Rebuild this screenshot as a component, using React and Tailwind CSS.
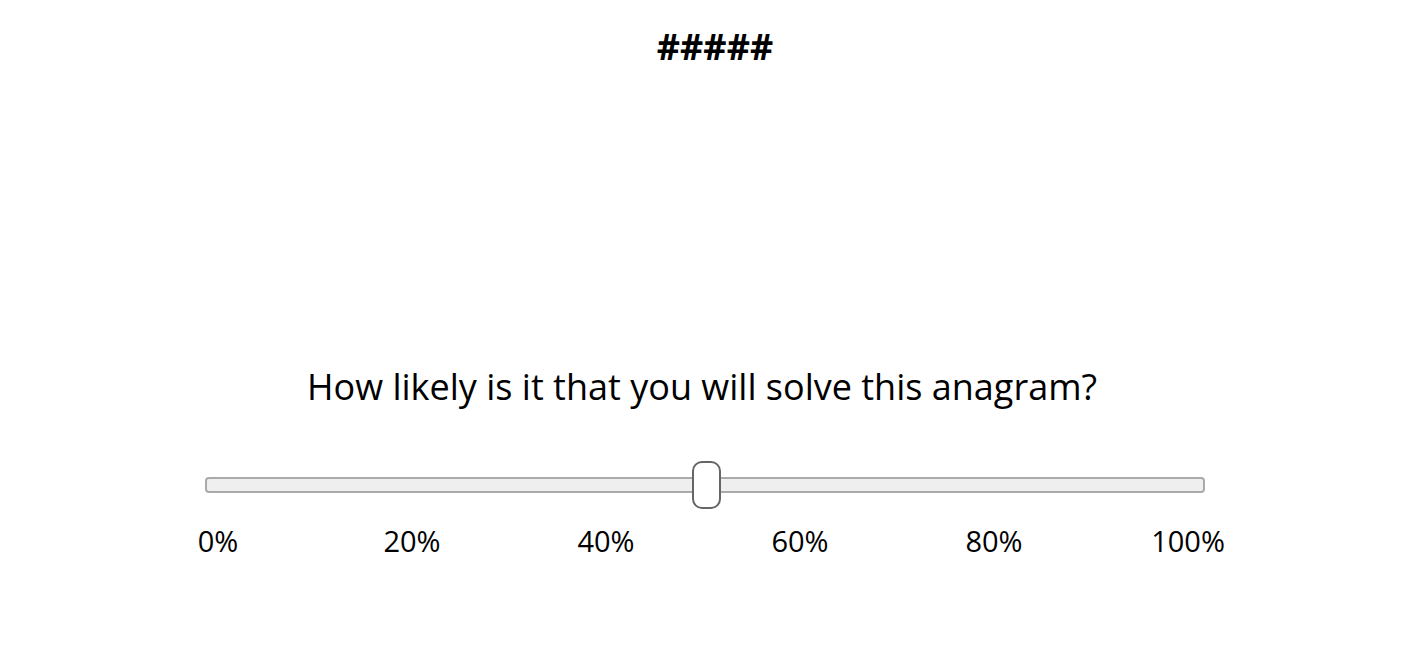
export default function App() {
  const labels = ["0%", "20%", "40%", "60%", "80%", "100%"];
  return (
    <div
      className="w-[1404px] h-[672px] bg-white text-black flex flex-col items-center"
      style={{ fontFamily: '"Open Sans", sans-serif' }}
    >
      <div className="mt-[22px] ml-[26px] text-[36px] font-bold leading-[50px]">#####</div>
      <div className="mt-[291px] text-[36px] leading-[48px]">
        How likely is it that you will solve this anagram?
      </div>
      <div className="mt-[50px] w-[1000px] ml-[6px] flex flex-col">
        <div className="relative h-[48px] flex items-center">
          <div className="w-full h-[16px] rounded-[4px] bg-[#efefef] border-2 border-[#aaaaaa]"></div>
          <div className="absolute left-[487px] top-0 w-[29px] h-[48px] rounded-[10px] bg-white border-2 border-[#666666]"></div>
        </div>
        <div className="mt-[12px] flex justify-between pr-[4px]">
          {labels.map((l) => (
            <div key={l} className="w-[26px] flex justify-center whitespace-nowrap text-[29px] leading-[40px]">
              {l}
            </div>
          ))}
        </div>
      </div>
    </div>
  );
}
